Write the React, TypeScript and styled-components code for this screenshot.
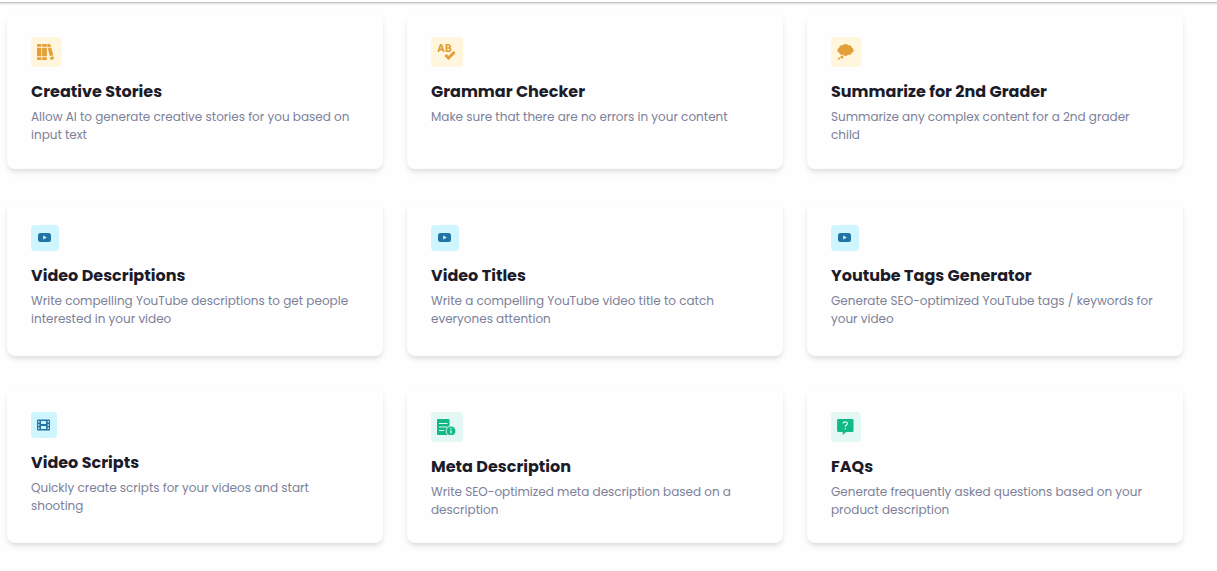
import React from "react";
import styled, { createGlobalStyle } from "styled-components";
import { FaSpellCheck } from "react-icons/fa";

const GlobalStyle = createGlobalStyle`
  * { box-sizing: border-box; }
  body {
    margin: 0;
    background: #fefefe;
    font-family: Poppins, Inter, "Liberation Sans", sans-serif;
  }
`;

const TopBar = styled.header`
  height: 3px;
  background: #fefefe;
  border-bottom: 1px solid #c6c6c6;
  box-shadow: 0 1px 2px rgba(0, 0, 0, 0.14);
`;

const Grid = styled.main`
  display: grid;
  grid-template-columns: repeat(3, minmax(0, 1fr));
  grid-template-rows: minmax(156px, auto) repeat(2, minmax(155px, auto));
  gap: 32px 24px;
  padding: 10px 34px 28px 7px;
`;

const Card = styled.article`
  padding: 24px;
  border-radius: 8px;
  background: #fefefe;
  box-shadow: 0 4px 6px -1px rgba(0, 0, 0, 0.1), 0 2px 4px -1px rgba(0, 0, 0, 0.06);
`;

type Tone = "amber" | "cyan" | "green";

const tones: Record<Tone, { ink: string; fill: string }> = {
  amber: { ink: "#e3a03a", fill: "#fff6dd" },
  cyan: { ink: "#2274a5", fill: "#cff5fe" },
  green: { ink: "#12b886", fill: "#e3f8f2" },
};

const IconBadge = styled.div<{ $tone: Tone }>`
  display: flex;
  width: fit-content;
  padding: 7px 7px 7px 6px;
  border-radius: 4px;
  color: ${(p) => tones[p.$tone].ink};
  background: ${(p) => tones[p.$tone].fill};

  svg { display: block; }
`;

const SpellIcon = styled(FaSpellCheck)`
  width: 19px;
  height: 16px;
`;

const Title = styled.h2`
  margin: 13px 0 4px;
  color: #1c1b29;
  font-size: 16px;
  font-weight: 700;
  line-height: 24px;
`;

const Description = styled.p`
  margin: 0;
  color: #7c8199;
  font-size: 12px;
  line-height: 18px;
`;

const BooksIcon = () => (
  <svg width="17" height="16" viewBox="0 0 17 16" fill="currentColor" aria-hidden="true">
    <path d="M.8 0h3.6v2.8H0V.8Q0 0 .8 0zM0 3.8h4.4v8.4H0zM0 13.2h4.4V16H.8q-.8 0-.8-.8z" />
    <path d="M5.100 0h4q.8 0 .8.8v2H5.100zM5.100 3.800h4.800v8.400H5.100zM5.100 13.200h4.800v2q0 .8-.8.8h-4z" />
    <path d="M10.200.6Q10.300 0 11 0h1.500q.7 0 .9.600l.6 2-3.400.9zM10.800 4.400l3.400-.9 2.100 7.800-3.400.9zM13.100 13.200l3.400-.9.4 1.800q.1.800-.6 1l-1.900.8q-.8.2-1-.6z" />
  </svg>
);

const ThoughtIcon = () => (
  <svg width="17" height="16" viewBox="0 0 17 16" fill="currentColor" aria-hidden="true">
    <circle cx="8.500" cy="3" r="3" />
    <circle cx="5" cy="4" r="2.800" />
    <circle cx="12" cy="4" r="2.800" />
    <circle cx="2.900" cy="6.200" r="2.500" />
    <circle cx="14.100" cy="6.200" r="2.500" />
    <circle cx="5" cy="8.200" r="2.600" />
    <circle cx="12" cy="8.200" r="2.600" />
    <circle cx="8.500" cy="9" r="2.900" />
    <rect x="4" y="4" width="9" height="5" />
    <circle cx="4.900" cy="12.900" r="1.500" />
    <circle cx="1.900" cy="14.600" r="1.100" />
  </svg>
);

const VideoIcon = () => (
  <svg width="15" height="12" viewBox="0 0 15 12" aria-hidden="true">
    <rect x="1" y="1" width="13" height="9" rx="2.500" fill="currentColor" />
    <path d="M6.200 3.400v4.200l3.600-2.100z" fill="#cff5fe" />
  </svg>
);

const FilmIcon = () => (
  <svg width="13" height="12" viewBox="0 0 13 12" aria-hidden="true">
    <rect width="13" height="11" y=".5" rx="1" fill="currentColor" />
    <path
      d="M4 2h5v3H4zM4 7h5v3H4zM1 2h1.400v1.500H1zM1 5.200h1.400v1.500H1zM1 8.400h1.400v1.500H1zM10.600 2H12v1.500h-1.400zM10.600 5.200H12v1.500h-1.400zM10.600 8.400H12v1.500h-1.400z"
      fill="#cff5fe"
    />
  </svg>
);

const MetaIcon = () => (
  <svg width="19" height="16" viewBox="0 0 19 16" aria-hidden="true">
    <path d="M1 0h10.500q1 0 1 1v15H1q-1 0-1-1V1q0-1 1-1z" fill="currentColor" />
    <path d="M2 4.500h8.500M2 8h8.500M2 11.500h5" stroke="#e3f8f2" strokeWidth="1.1" />
    <circle cx="14" cy="12" r="4.900" fill="currentColor" stroke="#e3f8f2" strokeWidth=".9" />
    <path d="M14 11.300v3.300M14 9v1.300" stroke="#e3f8f2" strokeWidth="1.300" />
  </svg>
);

const QuestionIcon = () => (
  <svg width="17" height="16" viewBox="0 0 17 16" aria-hidden="true">
    <path d="M1.300 0h14q1.200 0 1.200 1.200v10.600q0 1.200-1.200 1.200H9.200L5.700 16v-3H1.300Q.1 13 .1 11.800V1.200Q.1 0 1.300 0z" fill="currentColor" />
    <path d="M6.200 4.600C6.200 2.300 10.400 2.300 10.400 4.500 10.400 6 8.300 6 8.300 7.700M8.300 8.900v1.300" fill="none" stroke="#e3f8f2" strokeWidth="1.200" />
  </svg>
);

interface Template {
  title: string;
  text: string;
  tone: Tone;
  icon: React.ReactNode;
}

const templates: Template[] = [
  { title: "Creative Stories", text: "Allow AI to generate creative stories for you based on input text", tone: "amber", icon: <BooksIcon /> },
  { title: "Grammar Checker", text: "Make sure that there are no errors in your content", tone: "amber", icon: <SpellIcon aria-hidden /> },
  { title: "Summarize for 2nd Grader", text: "Summarize any complex content for a 2nd grader child", tone: "amber", icon: <ThoughtIcon /> },
  { title: "Video Descriptions", text: "Write compelling YouTube descriptions to get people interested in your video", tone: "cyan", icon: <VideoIcon /> },
  { title: "Video Titles", text: "Write a compelling YouTube video title to catch everyones attention", tone: "cyan", icon: <VideoIcon /> },
  { title: "Youtube Tags Generator", text: "Generate SEO-optimized YouTube tags / keywords for your video", tone: "cyan", icon: <VideoIcon /> },
  { title: "Video Scripts", text: "Quickly create scripts for your videos and start shooting", tone: "cyan", icon: <FilmIcon /> },
  { title: "Meta Description", text: "Write SEO-optimized meta description based on a description", tone: "green", icon: <MetaIcon /> },
  { title: "FAQs", text: "Generate frequently asked questions based on your product description", tone: "green", icon: <QuestionIcon /> },
];

export default function App() {
  return (
    <>
      <GlobalStyle />
      <TopBar />
      <Grid>
        {templates.map((t) => (
          <Card key={t.title}>
            <IconBadge $tone={t.tone}>{t.icon}</IconBadge>
            <Title>{t.title}</Title>
            <Description>{t.text}</Description>
          </Card>
        ))}
      </Grid>
    </>
  );
}
